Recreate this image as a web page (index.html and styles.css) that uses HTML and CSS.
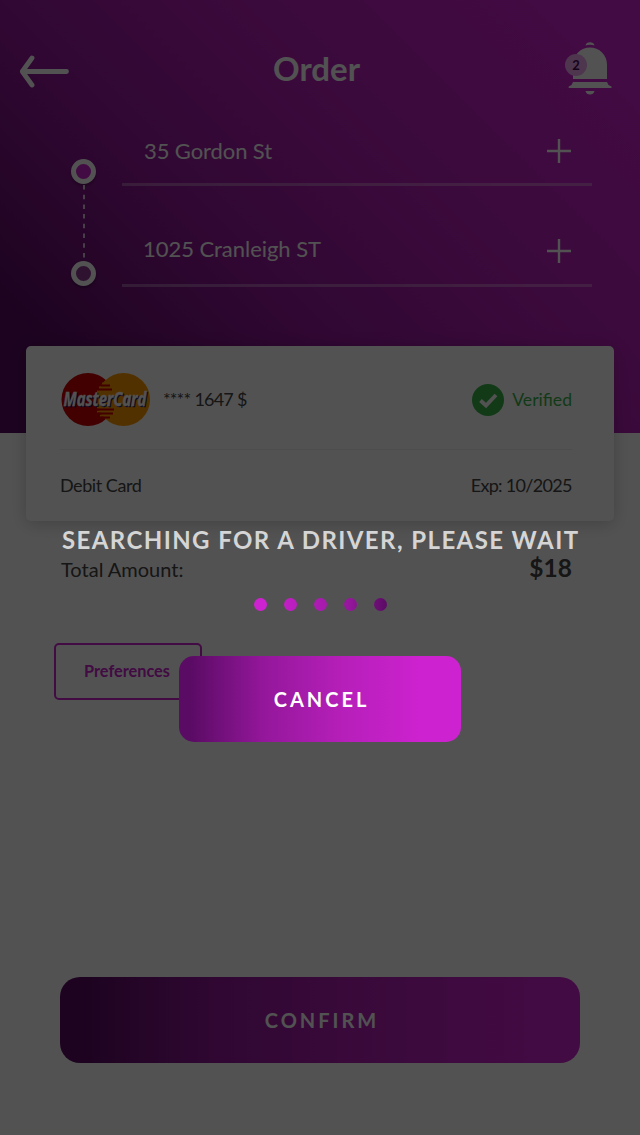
FILE: index.html
```html
<!DOCTYPE html>
<html lang="en">
<head>
<meta charset="utf-8">
<title>Order</title>
<link rel="stylesheet" href="styles.css">
</head>
<body>
<div class="screen">
  <header class="hero">
    <div class="topbar">
      <svg class="back" width="50" height="34" viewBox="0 0 50 34"><path d="M46.500 17.500H3M12 4L2.300 17.500L12 31" fill="none" stroke="#fff" stroke-width="4.800" stroke-linecap="round" stroke-linejoin="round"/></svg>
      <h1 class="title">Order</h1>
      <div class="bell">
        <svg width="44" height="54" viewBox="0 0 44 54" fill="#fff"><path d="M17.500 3.500a4.600 4.200 0 0 1 9 0q-4.500-1.500-9 0zM5 37V22.500a17 17 0 0 1 34 0V37zM5 40h34l1.500 3 3 1.500V46H.7V44.500L3.500 43zM17.500 49h9q-1 3.500-4.500 3.500t-4.500-3.500z"/></svg>
        <span class="badge">2</span>
      </div>
    </div>
    <div class="route">
      <div class="track"><i class="stop"></i><svg class="dashes" width="2" height="77"><path d="M1 1V75" stroke="#fff" stroke-width="1.500" stroke-dasharray="4.500 5.200"/></svg><i class="stop stop-end"></i></div>
      <div class="fields">
        <div class="field"><span>35 Gordon St</span><svg class="plus" width="24" height="24"><path d="M12 0V24M0 12H24" stroke="#fff" stroke-width="2.400"/></svg></div>
        <div class="field field-end"><span>1025 Cranleigh ST</span><svg class="plus" width="24" height="24"><path d="M12 0V24M0 12H24" stroke="#fff" stroke-width="2.400"/></svg></div>
      </div>
    </div>
  </header>
  <section class="card">
    <div class="card-top">
      <svg class="logo" width="92" height="54" viewBox="0 0 92 54">
        <circle cx="28" cy="27.500" r="26.500" fill="#cc0000"/><circle cx="63.500" cy="27.500" r="26.500" fill="#ff9900"/>
        <path d="M42 11.500h8M39 15.500h12M37 19.500h15M37 35.500h16M37 39.500h15M40 43.500h11" stroke="#ff9900" stroke-width="2"/>
        <path d="M41 13.500h9M38 17.500h14M37 37.500h17M38 41.500h15M41 45.500h9" stroke="#cc0000" stroke-width="2"/>
        <text class="brand shade" x="4.500" y="35" textLength="83" lengthAdjust="spacingAndGlyphs">MasterCard</text>
        <text class="brand" x="3.500" y="34" textLength="83" lengthAdjust="spacingAndGlyphs">MasterCard</text>
      </svg>
      <span class="number">**** 1647 $</span>
      <svg class="check" width="32" height="32"><circle cx="16" cy="16" r="16" fill="#39b54a"/><path d="M8.500 16.500L14 21.500L24 11" fill="none" stroke="#fff" stroke-width="3.800"/></svg>
      <span class="verified">Verified</span>
    </div>
    <div class="card-bottom"><span class="kind">Debit Card</span><span class="expiry">Exp: 10/2025</span></div>
  </section>
  <div class="total"><span>Total Amount:</span><strong>$18</strong></div>
  <button class="preferences">Preferences</button>
  <button class="confirm">CONFIRM</button>
</div>
<div class="overlay">
  <p class="message">SEARCHING FOR A DRIVER, PLEASE WAIT</p>
  <svg class="dots" width="134" height="14">
    <defs><linearGradient id="dotFill" gradientUnits="userSpaceOnUse" x1="0" x2="134" y1="0" y2="0"><stop offset=".1" stop-color="#cc22cf"/><stop offset=".5" stop-color="#aa1bb0"/><stop offset=".72" stop-color="#94179b"/><stop offset="1" stop-color="#5a0b64"/></linearGradient></defs>
    <g fill="url(#dotFill)"><circle cx="7.500" cy="7.500" r="6.500"/><circle cx="37.500" cy="7.500" r="6.500"/><circle cx="67.500" cy="7.500" r="6.500"/><circle cx="97.500" cy="7.500" r="6.500"/><circle cx="127.500" cy="7.500" r="6.500"/></g>
  </svg>
  <button class="cancel">CANCEL</button>
</div>
</body>
</html>
```
FILE: styles.css
```css
* { box-sizing: border-box; }
body { margin: 0; font-family: Lato, "Open Sans", sans-serif; background: #fff; }
button { font-family: inherit; padding: 0; border: 0; }
svg { display: block; flex: none; }
.screen { height: 1135px; overflow: hidden; display: flex; flex-direction: column; }
.hero { height: 433px; flex: none; background: linear-gradient(45deg, #5a0b64 12%, #94179b 38%, #b61fb9 62%, #cc22cf 90%); }
.topbar { height: 120px; padding: 42px 28px 0 20px; display: flex; justify-content: space-between; align-items: flex-start; }
.back { margin-top: 12px; }
.title { margin: 6px 5px 0 0; font-size: 33px; line-height: 40px; font-weight: 700; color: #fff; }
.bell { position: relative; width: 44px; height: 54px; }
.badge { position: absolute; left: -3px; top: 12px; width: 22px; height: 22px; border-radius: 50%; background: #f0a8f2; color: #4a0852; text-align: center; font-size: 13px; line-height: 22px; font-weight: 700; }
.route { display: flex; padding-left: 71px; }
.track { width: 25px; padding-top: 39px; display: flex; flex-direction: column; align-items: center; }
.stop { width: 25px; height: 25px; border: 5px solid #fff; border-radius: 50%; background: #cc22cf; box-shadow: 0 2px 3px rgba(0,0,0,.3); }
.stop-end { background: #8f3a96; }
.fields { width: 470px; margin-left: 26px; }
.field { height: 66px; padding: 18px 21px 0 22px; display: flex; justify-content: space-between; border-bottom: 3px solid rgba(255,255,255,.3); color: #fff; font-size: 22px; line-height: 26px; letter-spacing: -.1px; }
.field-end { height: 101px; padding-top: 50px; padding-left: 21px; letter-spacing: -.04px; }
.field-end .plus { margin-top: 3px; }
.plus { margin-top: 1px; }
.card { height: 175px; flex: none; margin: -87px 26px 0; padding: 26px 42px 0 34px; border-radius: 5px; background: #fff; box-shadow: 0 3px 18px rgba(0,0,0,.2); font-size: 18px; color: #444; }
.card-top { height: 78px; display: flex; align-items: flex-start; border-bottom: 1px solid #f0f0f0; line-height: 54px; }
.logo { overflow: visible; }
.brand { font: italic 700 19px "Open Sans", sans-serif; fill: #fff; stroke: #fff; stroke-width: .3px; }
.brand.shade { fill: #1b1b75; stroke: #1b1b75; }
.number { margin-left: 11px; flex: 1; letter-spacing: -.85px; word-spacing: .5px; }
.check { margin-top: 12px; margin-right: 8px; }
.verified { color: #39b54a; font-size: 17.6px; line-height: 55px; }
.card-bottom { display: flex; justify-content: space-between; padding-top: 24px; line-height: 22px; }
.kind { letter-spacing: -.45px; }
.expiry { letter-spacing: -.7px; margin-right: .3px; }
.total { display: flex; justify-content: space-between; margin: 32px 68px 0 61px; height: 32px; line-height: 32px; font-size: 20px; color: #444; }
.total strong { font-size: 24.500px; line-height: 30px; }
.preferences { flex: none; width: 148px; height: 57px; margin: 58px 0 0 54px; padding: 0 2px 2px 0; border: 2px solid #cc22cf; border-radius: 5px; background: none; color: #cc22cf; font-size: 16.3px; font-weight: 700; }
.confirm { flex: none; width: 520px; height: 86px; margin: 277px auto 0; padding-left: 4px; border-radius: 20px; background: linear-gradient(90deg, #5a0b64 4%, #94179b 30%, #b61fb9 62%, #cc22cf 90%); color: #fff; font-size: 20px; letter-spacing: 3px; font-weight: 700; }
.overlay { position: absolute; left: 0; top: 0; width: 640px; height: 1135px; padding-top: 524px; background: rgba(0,0,0,.68); display: flex; flex-direction: column; align-items: center; }
.message { margin: 0 0 0 1.500px; font-size: 24px; line-height: 32px; letter-spacing: 1.42px; font-weight: 700; color: #d5d5d5; white-space: nowrap; }
.dots { margin-top: 41px; }
.cancel { width: 282px; height: 86px; margin-top: 45px; padding-left: 3px; border-radius: 15px; background: linear-gradient(90deg, #5a0b64 4%, #94179b 30%, #b61fb9 58%, #cc22cf 85%); color: #fff; font-size: 20px; letter-spacing: 3px; font-weight: 700; }
```
